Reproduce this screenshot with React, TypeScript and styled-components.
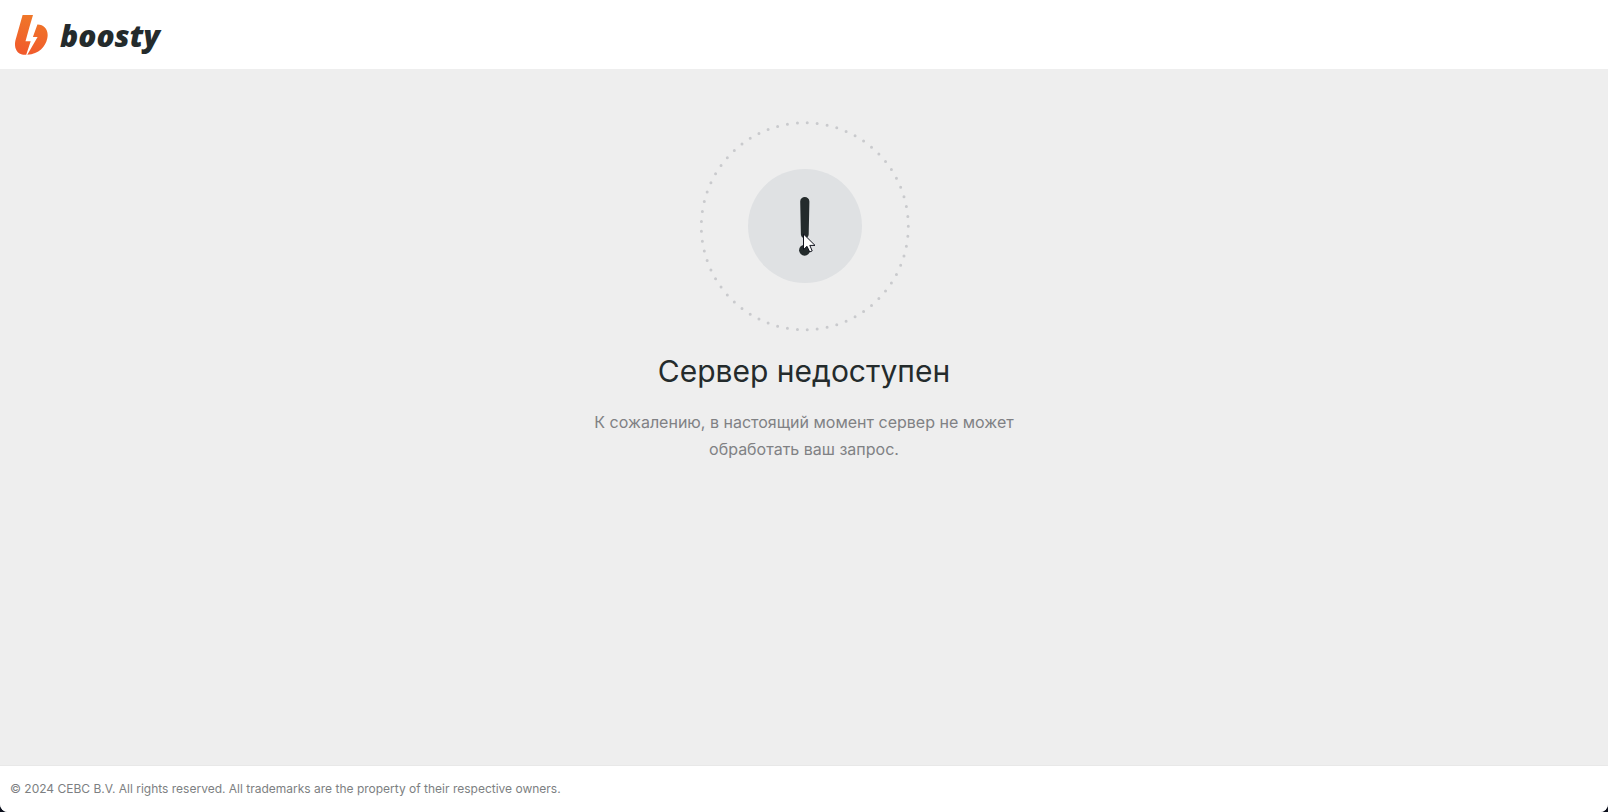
import React from "react";
import styled, { createGlobalStyle } from "styled-components";

const GlobalStyle = createGlobalStyle`
  *, *::before, *::after { box-sizing: border-box; }
  body {
    margin: 0;
    background: #0b0f1c;
    font-family: Inter, "Liberation Sans", sans-serif;
  }
`;

const Page = styled.div`
  display: flex;
  flex-direction: column;
  min-height: 100vh;
  overflow: hidden;
  background: #eeeeee;
  border-radius: 0 0 8px 8px;
`;

const Header = styled.header`
  display: flex;
  align-items: center;
  height: 69px;
  padding: 0 15px;
  background: #ffffff;
`;

const HomeLink = styled.a`
  display: flex;
  align-items: center;
  gap: 12px;
  color: #242b2c;
  text-decoration: none;
`;

const Wordmark = styled.span`
  padding-top: 2px;
  font-family: "Open Sans", "Noto Sans", sans-serif;
  font-size: 30px;
  font-style: italic;
  font-weight: 800;
  line-height: 40px;
`;

const Main = styled.main`
  display: flex;
  flex: 1;
  flex-direction: column;
  align-items: center;
  padding: 52px 16px;
  text-align: center;
`;

const Illustration = styled.div`
  position: relative;
  width: 211px;
  height: 211px;
`;

const Pointer = styled.svg`
  position: absolute;
  top: 112px;
  left: 104px;
`;

const Title = styled.h1`
  margin: 19px 0 0;
  color: #242b2c;
  font-size: 30px;
  font-weight: 400;
  line-height: 40px;
`;

const Message = styled.p`
  max-width: 460px;
  margin: 18px 0 0;
  color: #808184;
  font-size: 16px;
  line-height: 27px;
`;

const Footer = styled.footer`
  padding: 14px 10px;
  border-top: 1px solid #e8e8e8;
  background: #ffffff;
  color: #7d7f82;
  font-size: 12px;
  line-height: 18px;
`;

const LogoMark = () => (
  <svg width="33" height="40" viewBox="0 0 33 40" aria-hidden="true">
    <defs>
      <linearGradient id="flame" x1="0.6" y1="0" x2="0.4" y2="1">
        <stop offset="0" stopColor="#ef7829" />
        <stop offset="1" stopColor="#f15a2c" />
      </linearGradient>
    </defs>
    <path
      fill="url(#flame)"
      d="M7.6 0H18L14.3 12.5 10.5 26.2H15.7L11.2 39.8C3.8 40.4-1.6 35 .4 25.6ZM22.4 9.6C29.3 9.4 34 15.2 32.3 23.2 30.5 31.8 24 38.9 12.3 39.8L22.6 21.9H17.9Z"
    />
  </svg>
);

const Warning = () => (
  <svg width="211" height="211" viewBox="0 0 211 211" aria-hidden="true">
    <circle
      cx="105.8"
      cy="105.3"
      r="103.5"
      fill="none"
      stroke="#c9cacd"
      strokeWidth="3"
      strokeLinecap="round"
      strokeDasharray="0 1"
      pathLength="65"
    />
    <circle cx="106" cy="105" r="57" fill="#dfe1e3" />
    <path
      fill="#242b2c"
      d="M101.2 80.6C101.2 74.6 110.4 74.6 110.4 80.6L109.7 113.6C109.6 118.4 102 118.4 101.9 113.6Z"
    />
    <circle cx="105.6" cy="129.2" r="5.5" fill="#242b2c" />
  </svg>
);

export default function App() {
  return (
    <>
      <GlobalStyle />
      <Page>
        <Header>
          <HomeLink href="/">
            <LogoMark />
            <Wordmark>boosty</Wordmark>
          </HomeLink>
        </Header>
        <Main>
          <Illustration>
            <Warning />
            <Pointer width="13" height="20" viewBox="0 0 13 20" aria-hidden="true">
              <path
                d="M.5 1V16.6L4 13.3 6.7 19 9.2 17.9 6.8 12.4H12Z"
                fill="#ffffff"
                stroke="#10121c"
                strokeWidth="1"
              />
            </Pointer>
          </Illustration>
          <Title>Сервер недоступен</Title>
          <Message>
            К сожалению, в настоящий момент сервер не может обработать ваш запрос.
          </Message>
        </Main>
        <Footer>
          © 2024 CEBC B.V. All rights reserved. All trademarks are the property of their
          respective owners.
        </Footer>
      </Page>
    </>
  );
}
